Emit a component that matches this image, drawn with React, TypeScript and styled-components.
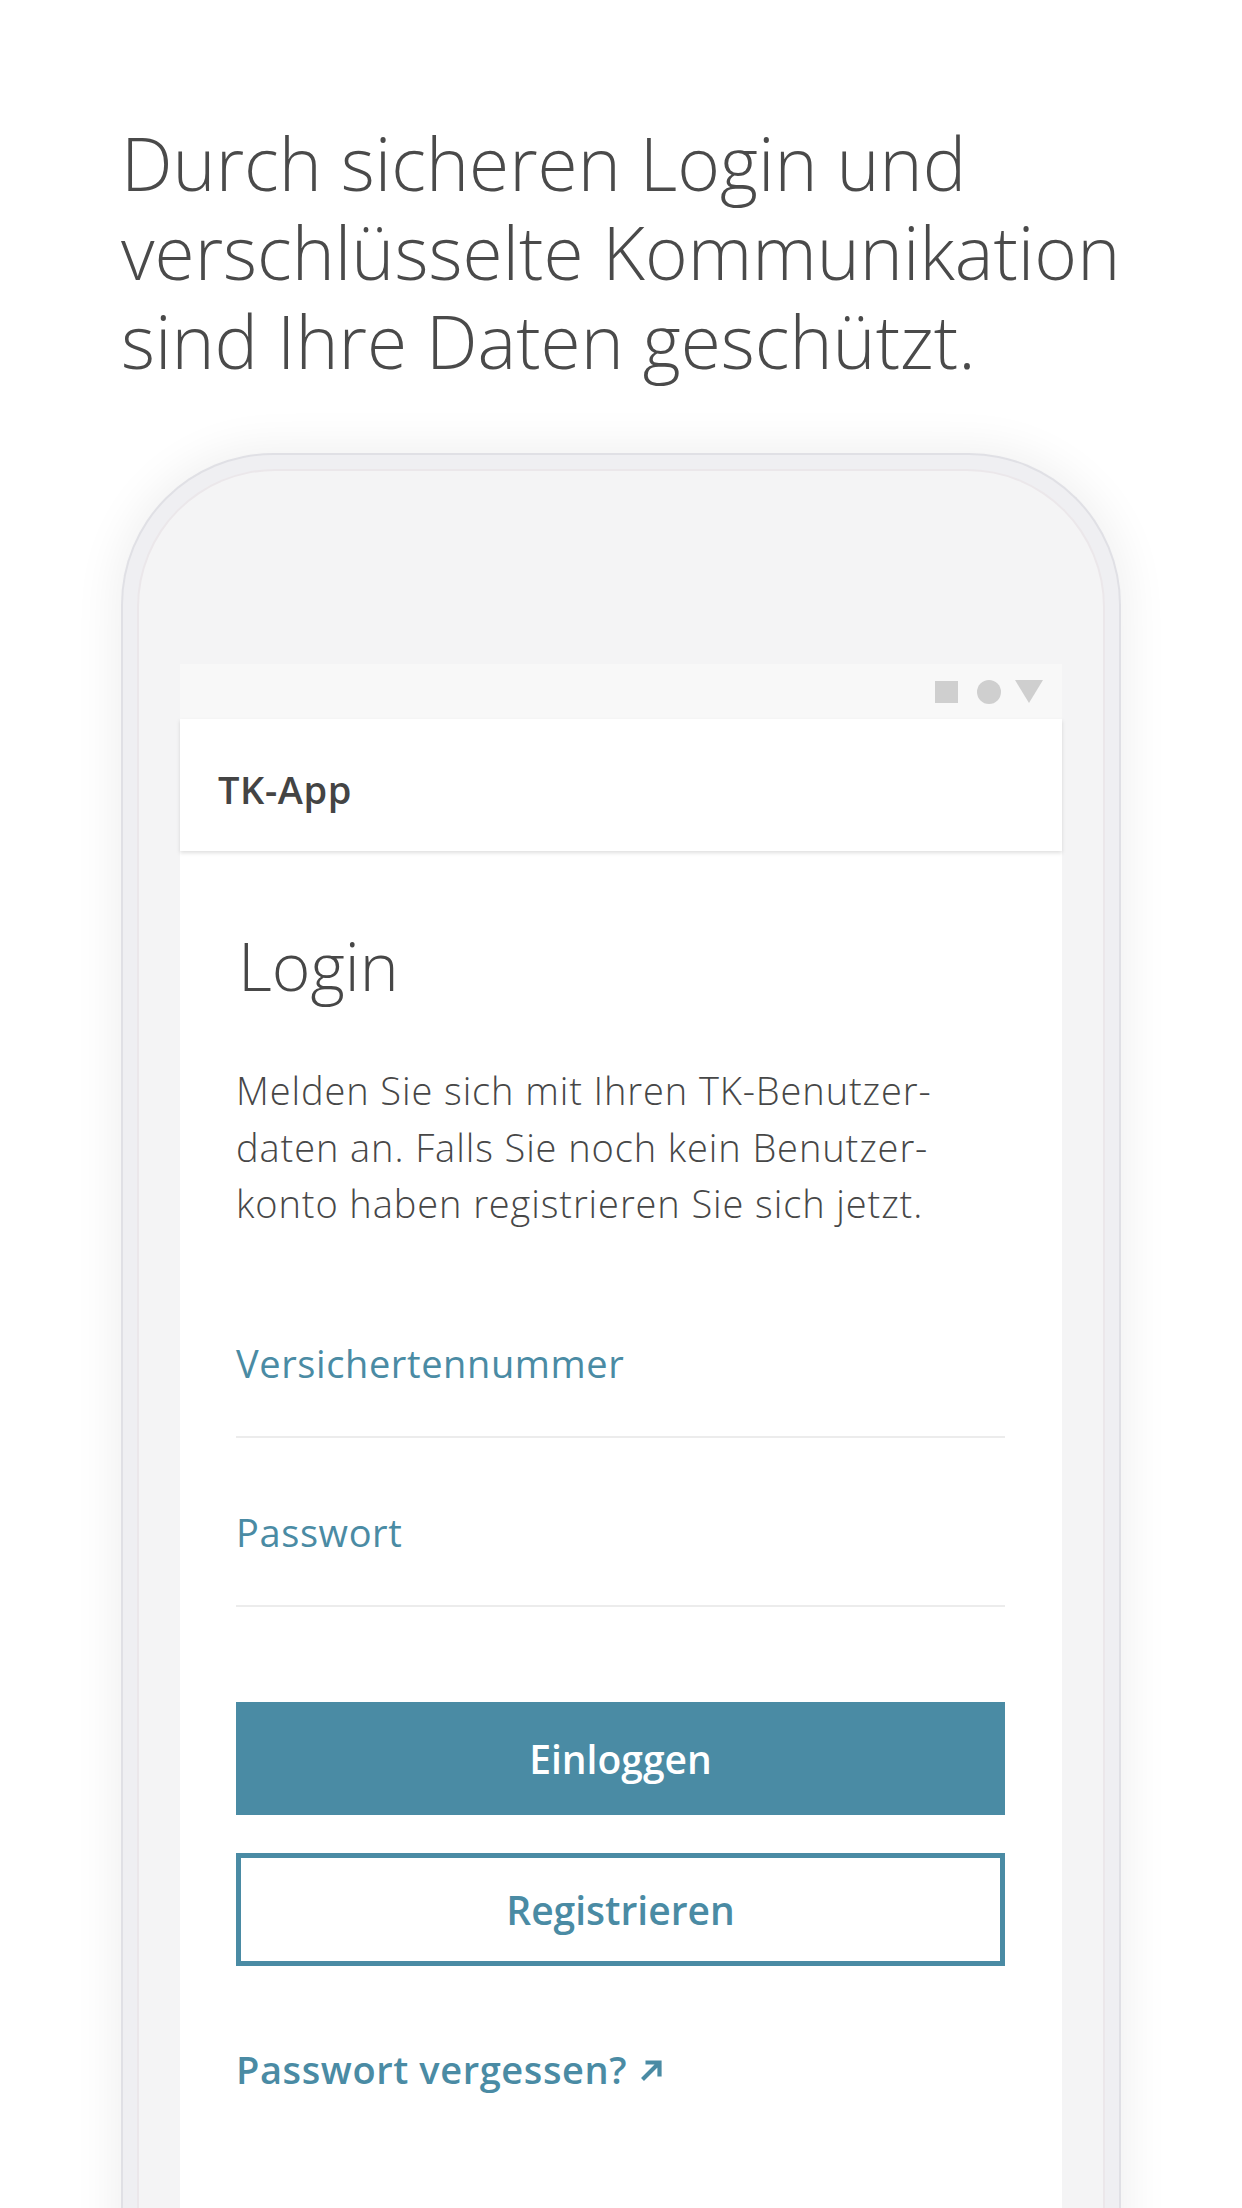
import React from "react";
import styled, { createGlobalStyle } from "styled-components";

const TEAL = "#4a8ba4";

const GlobalStyle = createGlobalStyle`
  html, body {
    margin: 0;
    padding: 0;
    background: #ffffff;
  }
  body {
    font-family: "Open Sans", "Noto Sans", sans-serif;
    color: #474747;
  }
`;

const ArrowIcon = () => (
  <svg width="24" height="24" viewBox="0 0 24 24" aria-hidden="true">
    <path
      d="M3.5 21.5 L19 6 M6.5 4.5 H20.5 V18.5"
      fill="none"
      stroke={TEAL}
      strokeWidth="4.2"
    />
  </svg>
);

const App = () => {
  return (
    <>
      <GlobalStyle />
      <Page>
        <Headline>
          Durch sicheren Login und
          <br />
          verschlüsselte Kommunikation
          <br />
          sind Ihre Daten geschützt.
        </Headline>

        <PhoneFrame>
          <PhoneBody>
            <Screen>
              <StatusBar>
                <StatusSquare />
                <StatusCircle />
                <StatusTriangle />
              </StatusBar>
              <AppBar>
                <AppTitle>TK-App</AppTitle>
              </AppBar>
              <Content>
                <Title>Login</Title>
                <Intro>
                  Melden Sie sich mit Ihren TK-Benutzer-
                  <br />
                  daten an. Falls Sie noch kein Benutzer-
                  <br />
                  konto haben registrieren Sie sich jetzt.
                </Intro>
                <Field $first>
                  <FieldLabel>Versichertennummer</FieldLabel>
                </Field>
                <Field>
                  <FieldLabel>Passwort</FieldLabel>
                </Field>
                <PrimaryButton>Einloggen</PrimaryButton>
                <SecondaryButton>Registrieren</SecondaryButton>
                <ForgotLink>
                  Passwort vergessen?
                  <ArrowIcon />
                </ForgotLink>
              </Content>
            </Screen>
          </PhoneBody>
        </PhoneFrame>
      </Page>
    </>
  );
};

export default App;

const Page = styled.div`
  width: 1242px;
  height: 2208px;
  overflow: hidden;
  padding-top: 118px;
  box-sizing: border-box;
`;

const Headline = styled.h1`
  margin: 0 0 68px 121px;
  font-size: 73px;
  line-height: 89px;
  font-weight: 300;
  color: #4a4a4a;
  white-space: nowrap;
`;

const PhoneFrame = styled.div`
  margin-left: 121px;
  width: 1000px;
  height: 1900px;
  box-sizing: border-box;
  border: 2px solid #e0e0e5;
  border-bottom: none;
  border-radius: 152px 152px 0 0;
  background: #efeff2;
  padding: 14px 14px 0;
  box-shadow: 0 0 44px 8px rgba(0, 0, 0, 0.06);
`;

const PhoneBody = styled.div`
  height: 100%;
  box-sizing: border-box;
  border: 2px solid #ebe7ea;
  border-bottom: none;
  border-radius: 138px 138px 0 0;
  background: #f4f4f5;
  padding: 193px 41px 0;
`;

const Screen = styled.div`
  height: 100%;
  background: #ffffff;
  display: flex;
  flex-direction: column;
`;

const StatusBar = styled.div`
  height: 55px;
  background: #f8f8f8;
  display: flex;
  align-items: center;
  justify-content: flex-end;
  padding-right: 19px;
`;

const StatusSquare = styled.span`
  width: 23px;
  height: 22px;
  background: #cfcfcf;
  margin-right: 19px;
`;

const StatusCircle = styled.span`
  width: 24px;
  height: 24px;
  border-radius: 50%;
  background: #cfcfcf;
  margin-right: 14px;
`;

const StatusTriangle = styled.span`
  width: 0;
  height: 0;
  border-left: 14px solid transparent;
  border-right: 14px solid transparent;
  border-top: 23px solid #cfcfcf;
`;

const AppBar = styled.div`
  height: 132px;
  background: #ffffff;
  display: flex;
  align-items: center;
  padding-left: 38px;
  box-shadow: 0 2px 4px rgba(0, 0, 0, 0.13);
  position: relative;
  z-index: 1;
`;

const AppTitle = styled.div`
  font-size: 38px;
  font-weight: 600;
  letter-spacing: 0.6px;
  color: #444444;
  padding-top: 8px;
`;

const Content = styled.div`
  padding: 0 57px 0 56px;
  display: flex;
  flex-direction: column;
`;

const Title = styled.h2`
  margin: 76px 0 0 2px;
  font-size: 66px;
  line-height: 76px;
  font-weight: 300;
  color: #474747;
`;

const Intro = styled.p`
  margin: 59px 0 0;
  font-size: 38px;
  line-height: 56.5px;
  font-weight: 300;
  letter-spacing: 0.9px;
  color: #474747;
  white-space: nowrap;
`;

const Field = styled.div<{ $first?: boolean }>`
  margin-top: ${(p) => (p.$first ? "37px" : "0")};
  padding: 70px 0 49px;
  border-bottom: 2px solid #ececec;
`;

const FieldLabel = styled.div`
  font-size: 38px;
  line-height: 48px;
  font-weight: 500;
  letter-spacing: 0.6px;
  color: ${TEAL};
`;

const ButtonBase = styled.div`
  height: 113px;
  box-sizing: border-box;
  display: flex;
  align-items: center;
  justify-content: center;
  font-size: 39px;
  font-weight: 600;
`;

const PrimaryButton = styled(ButtonBase)`
  margin-top: 95px;
  background: ${TEAL};
  color: #ffffff;
`;

const SecondaryButton = styled(ButtonBase)`
  margin-top: 38px;
  border: 5px solid ${TEAL};
  color: ${TEAL};
  background: #ffffff;
`;

const ForgotLink = styled.div`
  margin-top: 79px;
  display: flex;
  align-items: center;
  gap: 12px;
  font-size: 38px;
  line-height: 48px;
  font-weight: 600;
  letter-spacing: 0.6px;
  color: ${TEAL};

  svg {
    margin-top: 2px;
  }
`;
